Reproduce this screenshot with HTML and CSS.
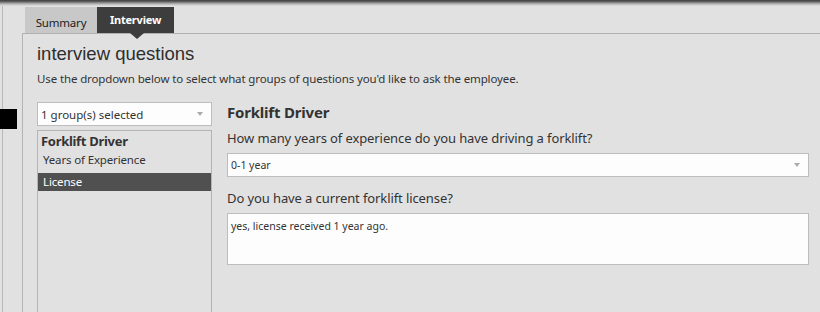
FILE: index.html
```html
<!DOCTYPE html>
<html lang="en">
<head>
    <meta charset="UTF-8">
    <title>Interview</title>
    <link rel="stylesheet" href="styles.css">
</head>
<body>
    <div class="topbar"></div>

    <div class="page">
        <!-- Barra lateral -->
        <div class="rail">
            <div class="marker"></div>
        </div>

        <div class="main">
            <!-- Pestañas -->
            <div class="tabs">
                <div class="tab">Summary</div>
                <div class="tab active">Interview</div>
            </div>

            <div class="panel">
                <h2>interview questions</h2>
                <p class="hint">Use the dropdown below to select what groups of questions you'd like to ask the employee.</p>

                <div class="content">
                    <!-- Columna izquierda -->
                    <div class="side">
                        <div class="select small">
                            <span>1 group(s) selected</span>
                            <span class="arrow"></span>
                        </div>
                        <div class="list">
                            <div class="group">Forklift Driver</div>
                            <div class="item">Years of Experience</div>
                            <div class="item selected">License</div>
                        </div>
                    </div>

                    <!-- Columna derecha -->
                    <div class="questions">
                        <h3>Forklift Driver</h3>
                        <div class="question">How many years of experience do you have driving a forklift?</div>
                        <div class="select answer">
                            <span>0-1 year</span>
                            <span class="arrow"></span>
                        </div>
                        <div class="question">Do you have a current forklift license?</div>
                        <div class="textarea">yes, license received 1 year ago.</div>
                    </div>
                </div>
            </div>
        </div>
    </div>
</body>
</html>
```

FILE: styles.css
```css
/* Estilos generales */
body {
    margin: 0;
    background-color: #e1e1e1;
    font-family: "Noto Sans", "Open Sans", sans-serif;
    color: #333333;
    height: 312px;
    overflow: hidden;
}

.topbar {
    height: 6px;
    background: linear-gradient(#3c3c3c, #5e5e5e 25%, #b4b4b4 65%, #e1e1e1);
}

.page {
    display: flex;
    height: 306px;
}

/* Barra lateral */
.rail {
    position: relative;
    width: 22px;
    flex: none;
}

.rail::before {
    content: "";
    position: absolute;
    left: 2px;
    top: 0;
    bottom: 0;
    width: 1px;
    background-color: #b8b8b8;
}

.marker {
    position: absolute;
    left: 0;
    top: 103px;
    width: 17px;
    height: 20px;
    background-color: #000000;
}

.main {
    flex: 1;
    display: flex;
    flex-direction: column;
}

/* Pestañas */
.tabs {
    display: flex;
    padding-left: 3px;
    margin-top: 1px;
    height: 26px;
}

.tab {
    width: 72px;
    box-sizing: border-box;
    text-align: center;
    padding-top: 5px;
    line-height: 22px;
    font-size: 11.5px;
    letter-spacing: -0.2px;
    background-color: #c8c8c8;
    color: #222222;
}

.tab.active {
    position: relative;
    width: 77px;
    padding-top: 2px;
    background-color: #3d3d3d;
    color: #ffffff;
    font-weight: bold;
    font-size: 11px;
}

.tab.active::after {
    content: "";
    position: absolute;
    left: 33px;
    bottom: -6px;
    border-left: 7px solid transparent;
    border-right: 7px solid transparent;
    border-top: 6px solid #3d3d3d;
}

/* Panel */
.panel {
    flex: 1;
    border-top: 1px solid #b0b0b0;
    border-left: 1px solid #b4b4b4;
    padding: 9px 11px 0 14px;
}

.panel h2 {
    margin: 0;
    font-family: "Liberation Sans", Arial, sans-serif;
    font-weight: normal;
    font-size: 18.5px;
    line-height: 22px;
    color: #2e2e2e;
}

.hint {
    margin: 6px 0 0;
    font-size: 11.5px;
    letter-spacing: -0.12px;
    line-height: 16px;
}

.content {
    display: flex;
    gap: 15px;
    margin-top: 15px;
}

/* Columna izquierda */
.side {
    width: 175px;
    flex: none;
    display: flex;
    flex-direction: column;
    gap: 4px;
}

.select {
    display: flex;
    align-items: center;
    justify-content: space-between;
    background-color: #fdfdfd;
    border: 1px solid #bdbdbd;
    box-sizing: border-box;
    padding: 0 8px 0 3px;
}

.select.small {
    height: 24px;
    font-size: 11.5px;
}

.arrow {
    width: 0;
    height: 0;
    border-left: 3.5px solid transparent;
    border-right: 3.5px solid transparent;
    border-top: 4px solid #ababab;
}

.list {
    height: 190px;
    border: 1px solid #b4b4b4;
    border-bottom: none;
    padding-top: 1px;
}

.group {
    font-weight: bold;
    font-size: 13px;
    letter-spacing: -0.3px;
    line-height: 18px;
    padding-left: 3px;
}

.item {
    font-size: 11.5px;
    letter-spacing: -0.15px;
    line-height: 19px;
    padding-left: 5px;
}

.item.selected {
    background-color: #505050;
    color: #ffffff;
    line-height: 18px;
    margin-top: 4px;
}

/* Columna derecha */
.questions {
    flex: 1;
}

.questions h3 {
    margin: 0;
    font-size: 15px;
    letter-spacing: -0.2px;
    line-height: 20px;
    font-weight: bold;
}

.question {
    font-size: 13px;
    letter-spacing: -0.1px;
    line-height: 18px;
    margin: 7px 0 6px;
}

.select.answer {
    height: 24px;
    font-size: 10.5px;
    margin-bottom: 12px;
}

.textarea {
    height: 52px;
    box-sizing: border-box;
    background-color: #fdfdfd;
    border: 1px solid #bdbdbd;
    font-size: 10.5px;
    line-height: 12px;
    padding: 6px 3px 0;
}
```
